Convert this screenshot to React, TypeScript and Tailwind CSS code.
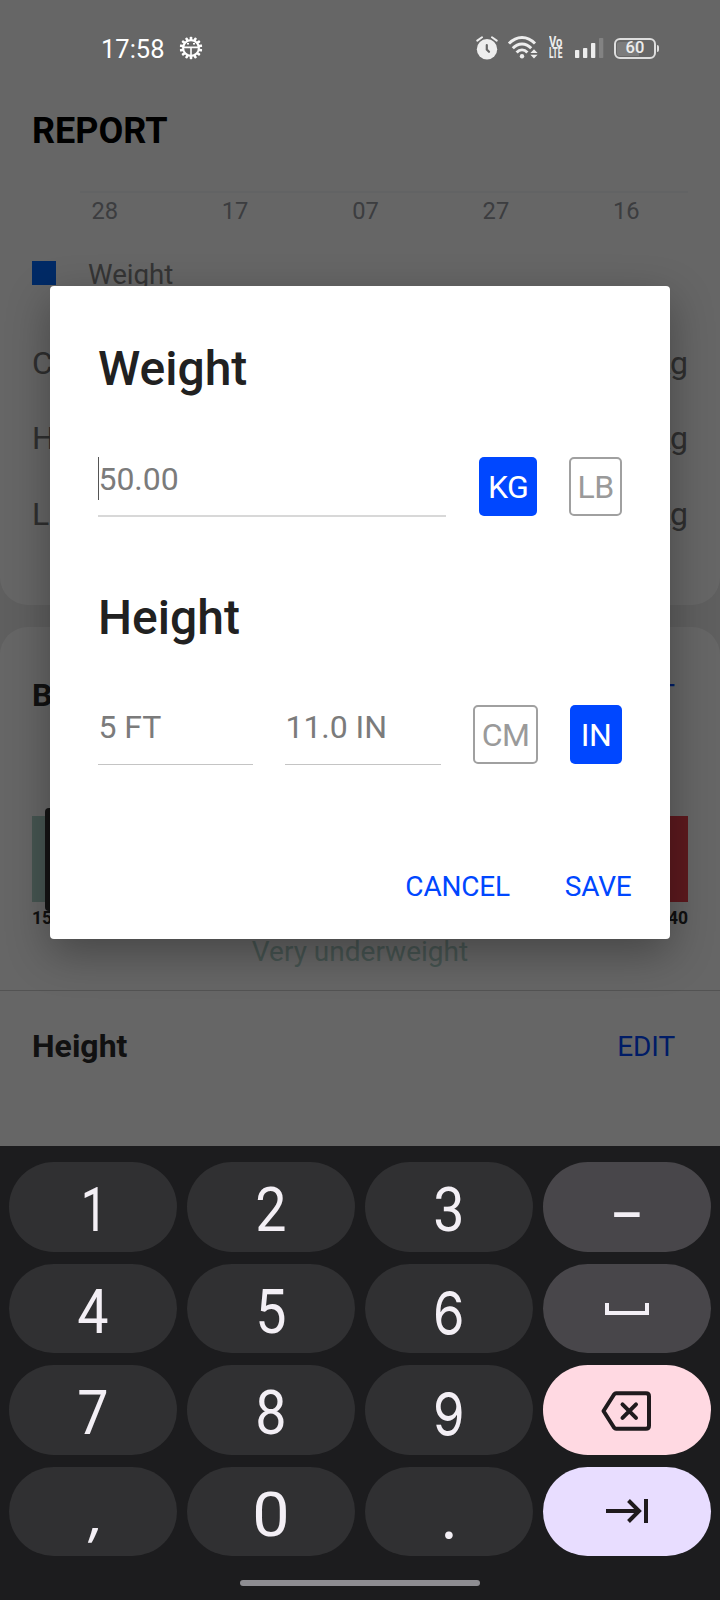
import type { ReactNode } from 'react';

const GEAR_TEETH = Array.from({ length: 14 }, (_, i) => (i * 360) / 14);

function GearIcon() {
  return (
    <svg width="24" height="24" viewBox="-12 -12 24 24" fill="none" stroke="#fff">
      {GEAR_TEETH.map((a) => (
        <rect key={a} x="-1.3" y="-11.3" width="2.6" height="3.4" rx="0.8" fill="#fff" stroke="none" transform={`rotate(${a})`} />
      ))}
      <circle r="7.9" strokeWidth="2.1" />
      <path d="M-7.5 -0.6H7.5M0 -0.6V8" strokeWidth="1.6" />
      <path d="M-4 -4.2h2M2 -4.2h2" strokeWidth="1.4" />
    </svg>
  );
}

function AlarmIcon() {
  return (
    <svg width="22" height="24" viewBox="0 0 22 24" fill="none" strokeLinecap="round">
      <circle cx="11" cy="13.2" r="10.2" fill="#ededed" />
      <path d="M1.3 4.6L6 1.3M20.7 4.6L16 1.3" stroke="#ededed" strokeWidth="2" />
      <path d="M10.8 9.2V13.6L13 15.8" stroke="#666" strokeWidth="2.2" />
    </svg>
  );
}

function WifiIcon() {
  return (
    <svg width="30" height="24" viewBox="0 0 30 24" fill="none" stroke="#ededed" strokeWidth="2.9">
      <path d="M1 7.6C8.5 -0.6 19.5 -0.6 27 7.6" />
      <path d="M4.8 12.2C10 6.5 18 6.5 23.2 12.2" />
      <path d="M8.6 16.4C11.7 13 16.3 13 19.4 16.4" />
      <circle cx="14" cy="20.3" r="2.2" fill="#ededed" stroke="none" />
      <path d="M26 13.2L29.6 16.9H22.4ZM26 22.5L29.6 18.8H22.4Z" fill="#ededed" stroke="none" />
    </svg>
  );
}

function SignalIcon() {
  return (
    <svg width="29" height="22" viewBox="0 0 29 22" fill="#ededed">
      <rect x="0" y="13" width="4.3" height="8" rx="0.8" />
      <rect x="8" y="11" width="4.3" height="10" rx="0.8" />
      <rect x="16" y="6" width="4.3" height="15" rx="0.8" />
      <rect x="24" y="1" width="4.3" height="20" rx="0.8" fill="#828282" />
    </svg>
  );
}

function StatusBar() {
  return (
    <div className="absolute inset-x-0 top-0 flex h-24 items-center">
      <span className="ml-[101px] w-[78px] pt-[2px] text-[25.5px] leading-8 font-normal text-white">17:58</span>
      <GearIcon />
      <div className="ml-[273px] flex items-center">
        <AlarmIcon />
        <span className="ml-[10px]">
          <WifiIcon />
        </span>
        <div className="ml-[11px] h-[22px] w-[15px] text-[14px] leading-[11px] font-bold text-[#ededed]">
          <div className="origin-left scale-x-[.8]">Vo</div>
          <div className="w-6 origin-left scale-x-[.6]">LTE</div>
        </div>
        <span className="ml-[11px]">
          <SignalIcon />
        </span>
        <div className="ml-[10px] flex h-[21px] w-[42px] items-center justify-center rounded-[6px] border-2 border-[#dedede] bg-[linear-gradient(90deg,#7c7c7c_60%,transparent_60%)] bg-clip-content p-px pt-[2px] text-[16.5px] leading-none font-medium text-[#ededed]">
          60
        </div>
        <div className="ml-[1px] h-[7px] w-[2px] rounded-r bg-[#dedede]" />
      </div>
    </div>
  );
}

function StatRow({ label }: { label: string }) {
  return (
    <div className="flex h-[75.5px] items-center justify-between px-8 text-[32px] text-[#757575]">
      <span>{label}</span>
      <span>kg</span>
    </div>
  );
}

function ReportPage() {
  return (
    <main className="h-[1146px] overflow-hidden bg-[#eeeeee]">
      <section className="h-[605px] rounded-b-[28px] bg-white pt-[106px]">
        <h1 className="px-8 text-[36px] leading-[50px] font-bold text-black">REPORT</h1>
        <div className="mt-[35px] mr-8 ml-20 h-[2px] bg-[#f6f7fb]" />
        <div className="mt-[2px] ml-[39.5px] grid w-[652px] grid-cols-5 text-center text-[23.7px] leading-[32px] text-[#96989f]">
          {['28', '17', '07', '27', '16'].map((day) => (
            <span key={day}>{day}</span>
          ))}
        </div>
        <div className="mt-[30px] flex h-[36px] items-center px-8 text-[27.7px] leading-9 text-[#858585]">
          <span className="-mt-[5px] mr-8 size-6 shrink-0 bg-[#0069ff]" />
          <span>Weight</span>
        </div>
        <div className="mt-[32px]">
          <StatRow label="C" />
          <StatRow label="H" />
          <StatRow label="L" />
        </div>
      </section>

      <section className="mt-[22px] h-[560px] rounded-t-[28px] bg-white pt-[44px]">
        <div className="flex h-12 items-center justify-between pr-[45px] pl-8">
          <h2 className="text-[32px] font-bold text-[#2c2c2c]">BMI</h2>
          <span className="text-[28px] text-[#0047ff]">EDIT</span>
        </div>
        <div className="mx-8 mt-[97px] flex h-[86px] items-center bg-[linear-gradient(90deg,#aed4ca_20%,#6ec4e8_20%_45%,#7bd88f_45%_65%,#f5b942_65%_82%,#e8404c_82%)]">
          <span className="ml-[13px] h-[103px] w-3 shrink-0 rounded-[4px] bg-[#333]" />
        </div>
        <div className="mx-8 mt-[5px] flex h-[22px] justify-between text-[17.5px] leading-[22px] font-bold text-[#2c2c2c]">
          <span>15</span>
          <span>40</span>
        </div>
        <div className="mt-[5px] text-center text-[28px] leading-[36px] text-[#b0d2ca]">Very underweight</div>
        <div className="mt-[20px] h-px bg-[#cfcfcf]" />
        <div className="mt-[31px] flex h-12 items-center justify-between pr-[45px] pl-8">
          <h2 className="text-[32px] font-bold text-[#2c2c2c]">Height</h2>
          <span className="pt-[2px] text-[28px] tracking-[-0.1px] text-[#0047ff]">EDIT</span>
        </div>
      </section>
    </main>
  );
}

function Field({ value, className, focused = false }: { value: string; className: string; focused?: boolean }) {
  return (
    <div className={`flex h-[60px] text-[32px] leading-[44px] text-[#7b7b7b] ${className}`}>
      {focused && <span className="-mr-px h-[43px] w-px bg-[#555]" />}
      <span className="pl-[0.5px] tracking-[-0.05px]">{value}</span>
    </div>
  );
}

function Unit({ label, active = false, className }: { label: string; active?: boolean; className: string }) {
  const tone = active ? 'bg-[#0047ff] text-white' : 'border-2 border-[#a0a0a0] bg-white text-[#9a9a9a]';
  return (
    <button className={`flex h-[59px] items-center justify-center rounded-[5px] pt-px text-[32px] leading-none tracking-[-0.6px] ${tone} ${className}`}>
      {label}
    </button>
  );
}

function MeasureDialog() {
  return (
    <div className="absolute inset-x-0 top-0 h-[1146px] overflow-hidden bg-black/60 pt-[286px]">
      <div className="mx-auto h-[653px] w-[620px] rounded-[4px] bg-white px-12 pt-[55px] shadow-[0_14px_44px_rgba(0,0,0,0.32)]">
        <h2 className="text-[48px] leading-[56px] font-medium text-[#212121]">Weight</h2>
        <div className="mt-[60px] flex h-[59px] justify-between">
          <Field value="50.00" focused className="w-[348px] border-b-2 border-[#d8d8d8]" />
          <div className="flex gap-8">
            <Unit label="KG" active className="w-[58px]" />
            <Unit label="LB" className="w-[53px]" />
          </div>
        </div>
        <h2 className="mt-[74px] text-[48px] leading-[56px] font-medium text-[#212121]">Height</h2>
        <div className="mt-[59px] flex h-[59px] gap-8">
          <Field value="5 FT" className="w-[155px] border-b border-[#c4c4c4]" />
          <Field value="11.0 IN" className="w-[156px] border-b border-[#c4c4c4]" />
          <Unit label="CM" className="w-[65px]" />
          <Unit label="IN" active className="w-[52px]" />
        </div>
        <div className="-mr-[9.5px] mt-[107px] flex justify-end gap-[55px] text-[28px] leading-8 tracking-[-0.2px] text-[#0047ff]">
          <button>CANCEL</button>
          <button>SAVE</button>
        </div>
      </div>
    </div>
  );
}

function Key({ children, className = 'bg-[#303032]' }: { children: ReactNode; className?: string }) {
  return <button className={`flex items-center justify-center rounded-full ${className}`}>{children}</button>;
}

function Digit({ children, className = 'scale-x-[.92]' }: { children: string; className?: string }) {
  return <span className={`pt-[9px] text-[60.5px] leading-none text-[#f3eff5] ${className}`}>{children}</span>;
}

function Keyboard() {
  return (
    <div className="flex h-[454px] flex-col items-center bg-[#1c1c1e] pt-4">
      <div className="grid h-[394px] w-[702px] grid-cols-4 grid-rows-4 gap-x-[9.6px] gap-y-3">
        <Key><Digit className="ml-[2px] scale-x-[.78]">1</Digit></Key>
        <Key><Digit>2</Digit></Key>
        <Key><Digit>3</Digit></Key>
        <Key className="bg-[#48464a]">
          <Digit className="-mt-[7px] font-['Noto_Sans',sans-serif]">–</Digit>
        </Key>
        <Key><Digit>4</Digit></Key>
        <Key><Digit>5</Digit></Key>
        <Key><Digit className="scale-x-[.84] font-[Inter,sans-serif]">6</Digit></Key>
        <Key className="bg-[#48464a]">
          <svg width="44" height="12" viewBox="0 0 44 12" className="mt-px" fill="none" stroke="#f3eff5" strokeWidth="4">
            <path d="M2 0V10H42V0" />
          </svg>
        </Key>
        <Key><Digit>7</Digit></Key>
        <Key><Digit>8</Digit></Key>
        <Key><Digit className="scale-x-[.84] font-[Inter,sans-serif]">9</Digit></Key>
        <Key className="bg-[#ffd9e2]">
          <svg width="50" height="40" viewBox="0 0 50 40" className="mt-[3px] -ml-[1px]" fill="none" stroke="#1f1a1d" strokeWidth="4" strokeLinejoin="round" strokeLinecap="round">
            <path d="M15 2.2H45Q48 2.2 48 5.2V34.8Q48 37.8 45 37.8H15Q14 37.8 13 36.5L2.5 20L13 3.5Q14 2.2 15 2.2Z" />
            <path d="M21.5 13.3L35 26.8M35 13.3L21.5 26.8" />
          </svg>
        </Key>
        <Key><Digit className="-mt-[7px] ml-[7px] -skew-x-[6deg] font-['Open_Sans',sans-serif]">,</Digit></Key>
        <Key><Digit className="scale-x-[1.1]">0</Digit></Key>
        <Key><Digit className="font-[Lato,sans-serif]">.</Digit></Key>
        <Key className="bg-[#e8ddff]">
          <svg width="42" height="24" viewBox="0 0 42 24" fill="none" stroke="#1f1a1d" strokeWidth="4">
            <path d="M0 12H34M22.5 1.5L33 12L22.5 22.5M40 0V24" />
          </svg>
        </Key>
      </div>
      <div className="mt-6 h-[6px] w-[240px] rounded-full bg-[#8e8d92]" />
    </div>
  );
}

export default function App() {
  return (
    <div className="relative h-[1600px] w-[720px] overflow-hidden font-[Roboto,sans-serif]">
      <ReportPage />
      <MeasureDialog />
      <StatusBar />
      <Keyboard />
    </div>
  );
}
